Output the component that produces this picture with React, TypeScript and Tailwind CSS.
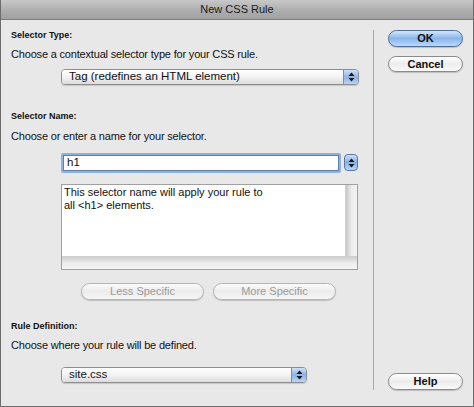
import React from "react";

const font = { fontFamily: '"Liberation Sans", Arial, sans-serif' };

function Arrows() {
  return (
    <svg width="7" height="10" viewBox="0 0 7 10">
      <path d="M3.5 0.5 L6.5 4 L0.5 4 Z" fill="#1a1a1a" />
      <path d="M3.5 9.5 L6.5 6 L0.5 6 Z" fill="#1a1a1a" />
    </svg>
  );
}

function Select({ label, width }: { label: string; width: string }) {
  return (
    <div
      className={`flex h-[16px] ${width} rounded-[4px] border border-[#8e8e8e] overflow-hidden shadow-[0_1px_1px_rgba(0,0,0,0.15)]`}
    >
      <div className="flex-1 flex items-center pl-[7px] bg-gradient-to-b from-[#ffffff] via-[#f3f3f3] to-[#dcdcdc] text-[11.5px] text-[#111]">
        {label}
      </div>
      <div className="w-[15px] flex items-center justify-center border-l border-[#6f8fbf] bg-gradient-to-b from-[#cfe0f7] via-[#8db4e8] to-[#b9d3f4]">
        <Arrows />
      </div>
    </div>
  );
}

function PillButton({
  children,
  blue,
  disabled,
  className,
}: {
  children: React.ReactNode;
  blue?: boolean;
  disabled?: boolean;
  className?: string;
}) {
  const base = blue
    ? "border-[#4c6e9e] bg-gradient-to-b from-[#d5e6fb] via-[#8ab5ea] to-[#bcd8f8] text-[#111] font-bold"
    : disabled
    ? "border-[#b5b5b5] bg-gradient-to-b from-[#fbfbfb] via-[#ececec] to-[#f6f6f6] text-[#9a9a9a]"
    : "border-[#8a8a8a] bg-gradient-to-b from-[#ffffff] via-[#ececec] to-[#fafafa] text-[#111]";
  return (
    <div
      className={`flex items-center justify-center rounded-full border text-[11px] shadow-[0_1px_1px_rgba(0,0,0,0.18)] ${base} ${className ?? ""}`}
    >
      {children}
    </div>
  );
}

export default function App() {
  return (
    <div
      style={font}
      className="w-[474px] h-[407px] flex flex-col bg-[#e8e8e8] border-x border-b border-[#6c6c6c] overflow-hidden"
    >
      {/* Title bar */}
      <div className="h-[20px] flex items-center justify-center bg-gradient-to-b from-[#c8c8c8] via-[#b0b0b0] to-[#a0a0a0] border-b border-[#7d7d7d] text-[11px] text-[#1a1a1a]">
        New CSS Rule
      </div>

      <div className="flex-1 flex">
        {/* Left column */}
        <div className="w-[372px] pl-[10px] text-[#111]">
          <div className="mt-[9px] h-[12px] leading-[12px] text-[9px] font-bold">
            Selector Type:
          </div>
          <div className="mt-[6px] h-[14px] leading-[14px] text-[11px] tracking-[-0.18px]">
            Choose a contextual selector type for your CSS rule.
          </div>
          <div className="mt-[8px] ml-[50px]">
            <Select label="Tag (redefines an HTML element)" width="w-[298px]" />
          </div>

          <div className="mt-[25px] h-[12px] leading-[12px] text-[9px] font-bold">
            Selector Name:
          </div>
          <div className="mt-[7px] h-[14px] leading-[14px] text-[11px] tracking-[-0.18px]">
            Choose or enter a name for your selector.
          </div>
          <div className="mt-[10px] ml-[50px] flex items-start gap-[3px]">
            <div className="w-[280px] h-[20px] rounded-[2px] p-[2px] bg-[#8fb2dc]">
              <div className="h-full bg-white border border-[#5d80b0] flex items-center pl-[3px] text-[11.5px] leading-none">
                h1
              </div>
            </div>
            <div className="mt-[1px] w-[14px] h-[17px] rounded-[4px] border border-[#5878a8] bg-gradient-to-b from-[#cfe0f7] via-[#86b0e6] to-[#bcd5f5] flex items-center justify-center">
              <Arrows />
            </div>
          </div>

          <div className="mt-[11px] ml-[50px] w-[297px] h-[86px] border border-[#a0a0a0] bg-[#f2f2f2] flex flex-col">
            <div className="flex-1 flex">
              <div className="flex-1 bg-white px-[2px] pt-[1px] text-[11px] leading-[13px] text-[#111]">
                This selector name will apply your rule to
                <br />
                all &lt;h1&gt; elements.
              </div>
              <div className="w-[12px] bg-gradient-to-r from-[#c8c8c8] via-[#ececec] to-[#f4f4f4] border-l border-[#d0d0d0]" />
            </div>
            <div className="h-[13px] bg-gradient-to-b from-[#cfcfcf] via-[#ececec] to-[#f4f4f4] border-t border-[#d0d0d0]" />
          </div>

          <div className="mt-[13px] ml-[70px] flex gap-[9px]">
            <PillButton disabled className="w-[123px] h-[17px]">
              Less Specific
            </PillButton>
            <PillButton disabled className="w-[123px] h-[17px]">
              More Specific
            </PillButton>
          </div>

          <div className="mt-[20px] h-[12px] leading-[12px] text-[9px] font-bold">
            Rule Definition:
          </div>
          <div className="mt-[6px] h-[14px] leading-[14px] text-[11px] tracking-[-0.18px]">
            Choose where your rule will be defined.
          </div>
          <div className="mt-[15px] ml-[50px]">
            <Select label="site.css" width="w-[246px]" />
          </div>
        </div>

        {/* Right column */}
        <div className="mt-[10px] mb-[16px] border-l border-[#a9a9a9] pl-[14px] flex flex-col">
          <PillButton blue className="w-[75px] h-[17px]">
            OK
          </PillButton>
          <PillButton className="mt-[9px] w-[75px] h-[16px] font-bold">
            Cancel
          </PillButton>
          <PillButton className="mt-auto w-[75px] h-[17px] font-bold">
            Help
          </PillButton>
        </div>
      </div>
    </div>
  );
}
